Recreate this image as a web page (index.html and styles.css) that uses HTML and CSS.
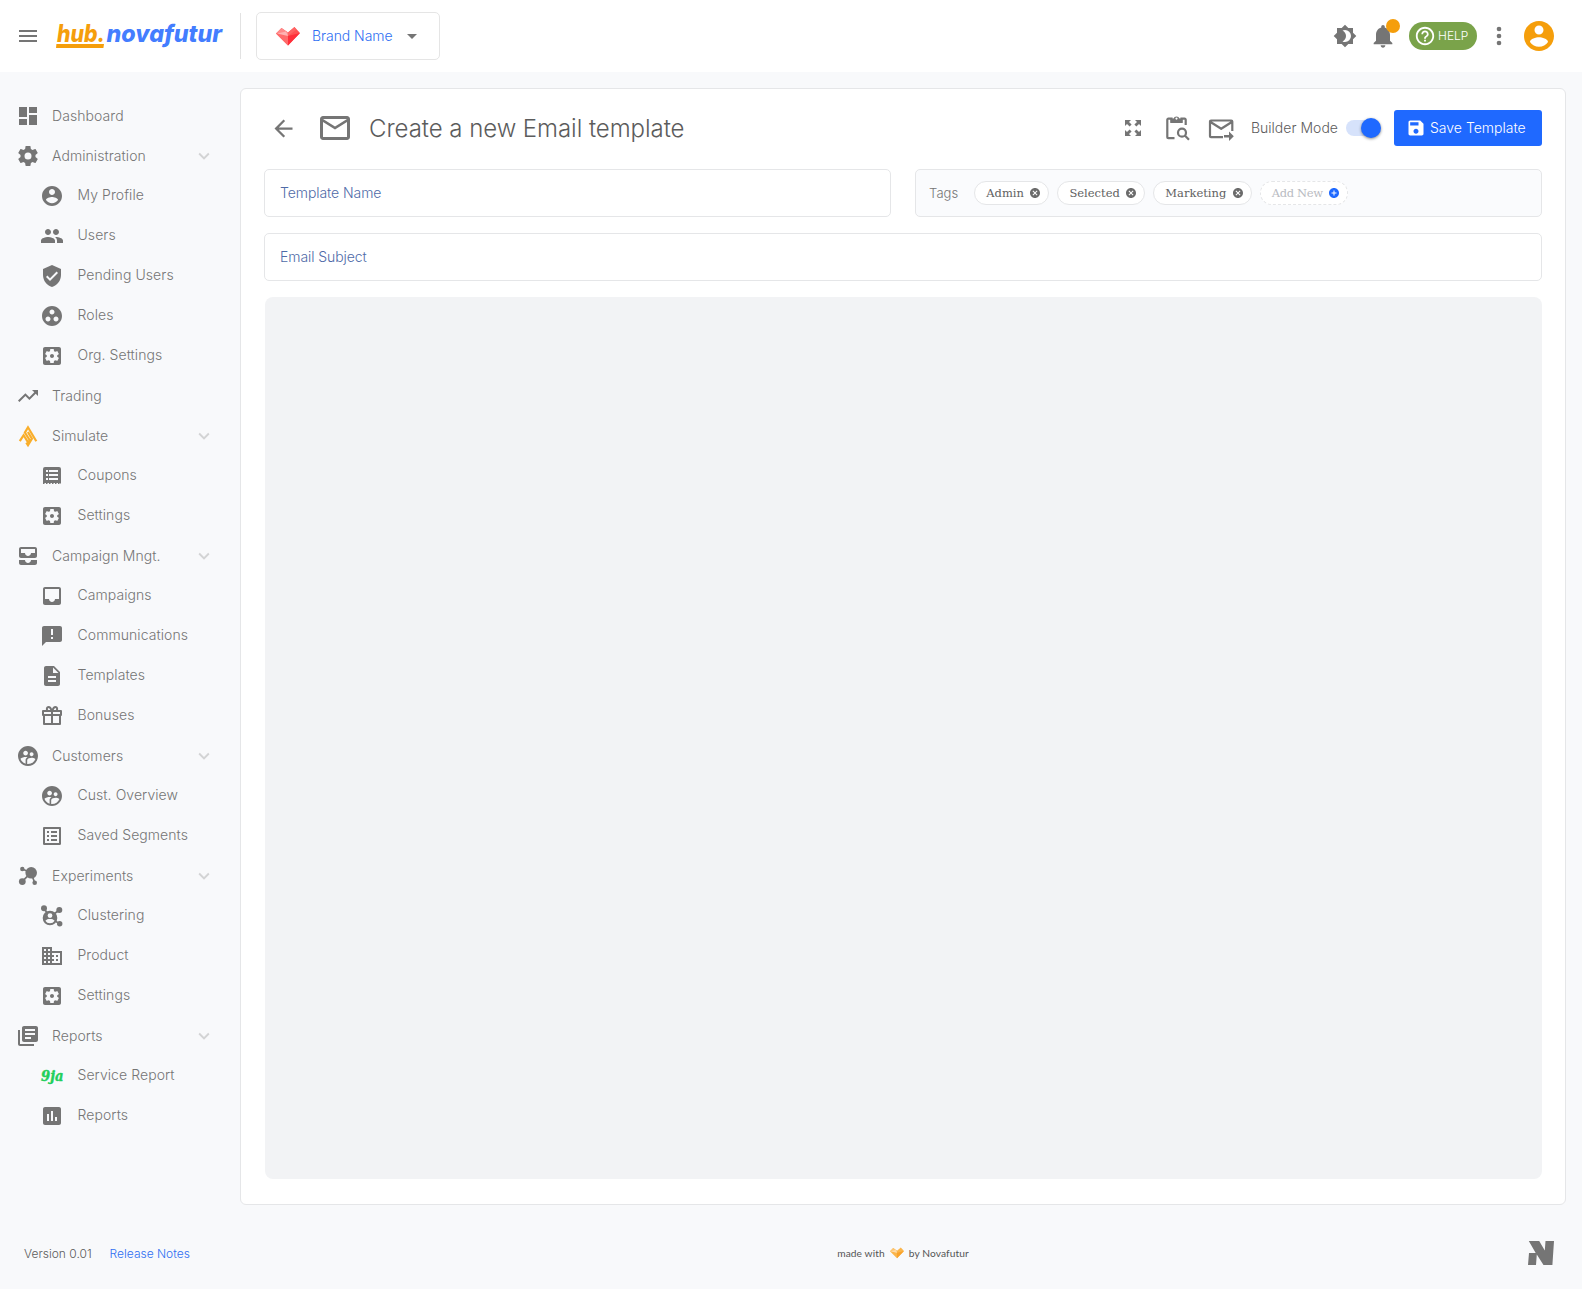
FILE: index.html
```
<!DOCTYPE html>
<html lang="en">
<head>
    <meta charset="UTF-8">
    <meta name="viewport" content="width=device-width, initial-scale=1.0">
    <title>Create a new Email template</title>
    <link rel="stylesheet" href="styles.css">
</head>
<body>

<!-- icon set -->
<svg class="sprite" xmlns="http://www.w3.org/2000/svg">
    <symbol id="i-menu" viewBox="0 0 24 24"><path d="M3 6h18v2H3zM3 11h18v2H3zM3 16h18v2H3z"/></symbol>
    <symbol id="i-dashboard" viewBox="0 0 24 24"><path d="M13,3V9H21V3M13,21H21V11H13M3,21H11V15H3M3,13H11V3H3V13Z"/></symbol>
    <symbol id="i-cog" viewBox="0 0 24 24"><path d="M12,15.5A3.5,3.5 0 0,1 8.5,12A3.5,3.5 0 0,1 12,8.5A3.5,3.5 0 0,1 15.5,12A3.5,3.5 0 0,1 12,15.5M19.43,12.97C19.47,12.65 19.5,12.33 19.5,12C19.5,11.67 19.47,11.34 19.43,11L21.54,9.37C21.73,9.22 21.78,8.95 21.66,8.73L19.66,5.27C19.54,5.05 19.27,4.96 19.05,5.05L16.56,6.05C16.04,5.66 15.5,5.32 14.87,5.07L14.5,2.42C14.46,2.18 14.25,2 14,2H10C9.75,2 9.54,2.18 9.5,2.42L9.13,5.07C8.5,5.32 7.96,5.66 7.44,6.05L4.95,5.05C4.73,4.96 4.46,5.05 4.34,5.27L2.34,8.73C2.21,8.95 2.27,9.22 2.46,9.37L4.57,11C4.53,11.34 4.5,11.67 4.5,12C4.5,12.33 4.53,12.65 4.57,12.97L2.46,14.63C2.27,14.78 2.21,15.05 2.34,15.27L4.34,18.73C4.46,18.95 4.73,19.03 4.95,18.95L7.44,17.94C7.96,18.34 8.5,18.68 9.13,18.93L9.5,21.58C9.54,21.82 9.75,22 10,22H14C14.25,22 14.46,21.82 14.5,21.58L14.87,18.93C15.5,18.67 16.04,18.34 16.56,17.94L19.05,18.95C19.27,19.03 19.54,18.95 19.66,18.73L21.66,15.27C21.78,15.05 21.73,14.78 21.54,14.63L19.43,12.97Z"/></symbol>
    <symbol id="i-profile" viewBox="0 0 24 24"><path d="M12 2C6.48 2 2 6.48 2 12s4.48 10 10 10 10-4.48 10-10S17.52 2 12 2zm0 3c1.66 0 3 1.34 3 3s-1.34 3-3 3-3-1.34-3-3 1.34-3 3-3zm0 14.2c-2.5 0-4.71-1.28-6-3.22.03-1.99 4-3.08 6-3.08 1.99 0 5.97 1.09 6 3.08-1.29 1.94-3.5 3.22-6 3.22z"/></symbol>
    <symbol id="i-users" viewBox="0 0 24 24"><path d="M16 11c1.66 0 2.99-1.34 2.99-3S17.66 5 16 5c-1.66 0-3 1.34-3 3s1.34 3 3 3zm-8 0c1.66 0 2.99-1.34 2.99-3S9.66 5 8 5C6.34 5 5 6.34 5 8s1.34 3 3 3zm0 2c-2.33 0-7 1.17-7 3.5V19h14v-2.5c0-2.33-4.67-3.5-7-3.5zm8 0c-.29 0-.62.02-.97.05 1.16.84 1.97 1.97 1.97 3.45V19h6v-2.5c0-2.33-4.67-3.5-7-3.5z"/></symbol>
    <symbol id="i-shield" viewBox="0 0 24 24"><path d="M12 1L3 5v6c0 5.55 3.84 10.74 9 12 5.16-1.26 9-6.45 9-12V5l-9-4zm-2 16l-4-4 1.41-1.41L10 14.17l6.59-6.59L18 9l-8 8z"/></symbol>
    <symbol id="i-roles" viewBox="0 0 24 24"><path d="M12 2C6.48 2 2 6.48 2 12s4.48 10 10 10 10-4.48 10-10S17.52 2 12 2zM8 17.5c-1.38 0-2.5-1.12-2.5-2.5s1.12-2.5 2.5-2.5 2.5 1.12 2.5 2.5-1.12 2.5-2.5 2.5zM9.5 8c0-1.38 1.12-2.5 2.5-2.5s2.5 1.12 2.5 2.5-1.12 2.5-2.5 2.5S9.5 9.38 9.5 8zm6.5 9.5c-1.38 0-2.5-1.12-2.5-2.5s1.12-2.5 2.5-2.5 2.5 1.12 2.5 2.5-1.12 2.5-2.5 2.5z"/></symbol>
    <symbol id="i-settings" viewBox="0 0 24 24"><path d="M12 10c-1.1 0-2 .9-2 2s.9 2 2 2 2-.9 2-2-.9-2-2-2zm7-7H5c-1.11 0-2 .9-2 2v14c0 1.1.89 2 2 2h14c1.11 0 2-.9 2-2V5c0-1.1-.89-2-2-2zm-1.75 9c0 .23-.02.46-.05.68l1.48 1.16c.13.11.17.3.08.45l-1.4 2.42c-.09.15-.27.21-.43.15l-1.74-.7c-.36.28-.76.51-1.18.69l-.26 1.85c-.03.17-.18.3-.35.3h-2.8c-.17 0-.32-.13-.35-.29l-.26-1.85c-.43-.18-.82-.41-1.18-.69l-1.74.7c-.16.06-.34 0-.43-.15l-1.4-2.42c-.09-.15-.05-.34.08-.45l1.48-1.16c-.03-.23-.05-.46-.05-.69 0-.23.02-.46.05-.68l-1.48-1.16c-.13-.11-.17-.3-.08-.45l1.4-2.42c.09-.15.27-.21.43-.15l1.74.7c.36-.28.76-.51 1.18-.69l.26-1.85c.03-.17.18-.3.35-.3h2.8c.17 0 .32.13.35.29l.26 1.85c.43.18.82.41 1.18.69l1.74-.7c.16-.06.34 0 .43.15l1.4 2.42c.09.15.05.34-.08.45l-1.48 1.16c.03.23.05.46.05.69z"/></symbol>
    <symbol id="i-trading" viewBox="0 0 24 24"><path d="M16 6l2.29 2.29-4.88 4.88-4-4L2 16.59 3.41 18l6-6 4 4 6.3-6.29L22 12V6z"/></symbol>
    <symbol id="i-simulate" viewBox="0 0 24 24"><path fill="none" stroke="#f9ae2b" stroke-width="2.200" d="M3.800 17.200L7.600 11.200L12.200 18.600L13.600 16L8.900 8.600L12 3.300L20.300 17.200M11.900 8L15.900 14.800L12 21.200L10.300 18.600"/></symbol>
    <symbol id="i-coupon" viewBox="0 0 24 24"><path fill-rule="evenodd" d="M5 3h14a2 2 0 0 1 2 2v14H3V5a2 2 0 0 1 2-2zM6 6v2h2V6zM9 6v2h9V6zM6 10v2h2v-2zM9 10v2h9v-2zM6 14v2h2v-2zM9 14v2h9v-2z"/><path d="M3 19h1.5v1H3zM6 19h1.5v1H6zM9 19h1.5v1H9zM12 19h1.5v1H12zM15 19h1.5v1H15zM18 19h1.5v1H18zM20.5 19h.5v1h-.5z"/></symbol>
    <symbol id="i-all-inbox" viewBox="0 0 24 24"><path d="M19 3H5c-1.1 0-2 .9-2 2v7c0 1.1.9 2 2 2h14c1.1 0 2-.9 2-2V5c0-1.1-.9-2-2-2zm0 6h-4c0 1.62-1.38 3-3 3s-3-1.38-3-3H5V5h14v4zm-4 7h6v3c0 1.1-.9 2-2 2H5c-1.1 0-2-.9-2-2v-3h6c0 1.66 1.34 3 3 3s3-1.34 3-3z"/></symbol>
    <symbol id="i-inbox" viewBox="0 0 24 24"><path d="M19 3H4.99c-1.11 0-1.98.89-1.98 2L3 19c0 1.1.88 2 1.99 2H19c1.1 0 2-.9 2-2V5c0-1.11-.9-2-2-2zm0 12h-4c0 1.66-1.35 3-3 3s-3-1.34-3-3H4.99V5H19v10z"/></symbol>
    <symbol id="i-feedback" viewBox="0 0 24 24"><path d="M20 2H4c-1.1 0-1.99.9-1.99 2L2 22l4-4h14c1.1 0 2-.9 2-2V4c0-1.1-.9-2-2-2zm-7 13h-2v-2h2v2zm0-4h-2V5h2v6z"/></symbol>
    <symbol id="i-file" viewBox="0 0 24 24"><path d="M14 2H6c-1.1 0-1.99.9-1.99 2L4 20c0 1.1.89 2 1.99 2H18c1.1 0 2-.9 2-2V8l-6-6zm2 16H8v-2h8v2zm0-4H8v-2h8v2zm-3-5V3.5L18.5 9H13z"/></symbol>
    <symbol id="i-gift" viewBox="0 0 24 24"><path fill="none" stroke="currentColor" stroke-width="2" stroke-linejoin="round" d="M3 7h18v4H3zM4 11v9h16v-9M12 7v13M11.6 6.6C11 4.5 9.800 3 8.500 3C7 3 6.300 4.700 7.300 6.500M12.400 6.600C13 4.500 14.200 3 15.500 3C17 3 17.700 4.700 16.700 6.500"/></symbol>
    <symbol id="i-customers" viewBox="0 0 24 24"><path d="M11.99 2c-5.52 0-10 4.48-10 10s4.48 10 10 10 10-4.48 10-10-4.48-10-10-10zm3.61 6.34c1.07 0 1.93.86 1.93 1.93 0 1.07-.86 1.93-1.93 1.93-1.07 0-1.93-.86-1.93-1.93-.01-1.07.86-1.93 1.93-1.93zm-6-1.58c1.3 0 2.36 1.06 2.36 2.36 0 1.3-1.06 2.36-2.36 2.36s-2.36-1.06-2.36-2.36c0-1.31 1.05-2.36 2.36-2.36zm0 9.13v3.75c-2.4-.75-4.3-2.6-5.14-4.96 1.05-1.12 3.67-1.69 5.14-1.69.53 0 1.2.08 1.9.22-1.64.87-1.9 2.02-1.9 2.68zM11.99 20c-.27 0-.53-.01-.79-.04v-4.07c0-1.42 2.94-2.13 4.4-2.13 1.07 0 2.92.39 3.84 1.15-1.17 2.97-4.06 5.09-7.45 5.09z"/></symbol>
    <symbol id="i-list" viewBox="0 0 24 24"><path d="M19 5v14H5V5h14m1.100-2H3.900c-.5 0-.9.4-.9.9v16.200c0 .4.4.9.9.9h16.200c.4 0 .9-.5.9-.9V3.900c0-.5-.5-.9-.9-.9zM11 7h6v2h-6V7zm0 4h6v2h-6v-2zm0 4h6v2h-6zM7 7h2v2H7zm0 4h2v2H7zm0 4h2v2H7z"/></symbol>
    <symbol id="i-experiments" viewBox="0 0 24 24"><path fill="none" stroke="currentColor" stroke-width="1.700" d="M6.300 5L15 8.700L6.300 17.300M15 8.700L18.700 18.700"/><circle cx="15.200" cy="8.800" r="5.800"/><circle cx="6.300" cy="5" r="2.200"/><circle cx="6.300" cy="17.600" r="3.400"/><circle cx="18.700" cy="18.700" r="2.300"/></symbol>
    <symbol id="i-cluster" viewBox="0 0 24 24"><path fill="none" stroke="currentColor" stroke-width="1.700" d="M4 4L7 9M19.300 6L14 10M15 17L19.700 19.700"/><circle cx="4" cy="4.200" r="3"/><circle cx="19.300" cy="6" r="3"/><circle cx="19.700" cy="19.700" r="2.700"/><path fill-rule="evenodd" d="M10 6.700a7.300 7.300 0 1 0 0 14.600a7.300 7.300 0 1 0 0-14.600zM10 9.200a2.400 2.400 0 1 1 0 4.800a2.400 2.400 0 1 1 0-4.800zM5.400 16.700C6.500 15.300 8 14.900 10 14.900s3.500.4 4.600 1.800C13.500 18.400 12 19.200 10 19.200s-3.500-.8-4.600-2.500z"/></symbol>
    <symbol id="i-domain" viewBox="0 0 24 24"><path d="M12 7V3H2v18h20V7H12zM6 19H4v-2h2v2zm0-4H4v-2h2v2zm0-4H4V9h2v2zm0-4H4V5h2v2zm4 12H8v-2h2v2zm0-4H8v-2h2v2zm0-4H8V9h2v2zm0-4H8V5h2v2zm10 12h-8v-2h2v-2h-2v-2h2v-2h-2V9h8v10zm-2-8h-2v2h2v-2zm0 4h-2v2h2v-2z"/></symbol>
    <symbol id="i-library" viewBox="0 0 24 24"><path d="M4 6H2v14c0 1.100.9 2 2 2h14v-2H4V6zm16-4H8c-1.100 0-2 .9-2 2v12c0 1.100.9 2 2 2h12c1.100 0 2-.9 2-2V4c0-1.100-.9-2-2-2zm-1 9H9V9h10v2zm-4 4H9v-2h6v2zm4-8H9V5h10v2z"/></symbol>
    <symbol id="i-chart" viewBox="0 0 24 24"><path d="M19 3H5c-1.100 0-2 .9-2 2v14c0 1.100.9 2 2 2h14c1.100 0 2-.9 2-2V5c0-1.100-.9-2-2-2zM9 17H7v-7h2v7zm4 0h-2V7h2v10zm4 0h-2v-4h2v4z"/></symbol>
    <symbol id="i-chevron" viewBox="0 0 24 24"><path d="M7.410 8.590L12 13.170l4.590-4.580L18 10l-6 6-6-6z"/></symbol>
    <symbol id="i-caret" viewBox="0 0 24 24"><path d="M7 10l5 5 5-5z"/></symbol>
    <symbol id="i-theme" viewBox="0 0 24 24"><path d="M12,18C11.110,18 10.260,17.800 9.500,17.450C11.560,16.500 13,14.420 13,12C13,9.580 11.560,7.500 9.500,6.550C10.260,6.200 11.110,6 12,6A6,6 0 0,1 18,12A6,6 0 0,1 12,18M20,8.690V4H15.310L12,0.690L8.690,4H4V8.690L0.690,12L4,15.310V20H8.690L12,23.310L15.310,20H20V15.310L23.310,12L20,8.690Z"/></symbol>
    <symbol id="i-bell" viewBox="0 0 24 24"><path d="M12 22c1.100 0 2-.9 2-2h-4c0 1.100.89 2 2 2zm6-6v-5c0-3.070-1.640-5.640-4.500-6.320V4c0-.83-.67-1.500-1.500-1.500s-1.500.67-1.500 1.500v.68C7.630 5.360 6 7.920 6 11v5l-2 2v1h16v-1l-2-2z"/></symbol>
    <symbol id="i-help" viewBox="0 0 24 24"><path d="M11 18h2v-2h-2v2zm1-16C6.480 2 2 6.480 2 12s4.480 10 10 10 10-4.480 10-10S17.520 2 12 2zm0 18c-4.410 0-8-3.590-8-8s3.590-8 8-8 8 3.590 8 8-3.590 8-8 8zm0-14c-2.210 0-4 1.790-4 4h2c0-1.100.9-2 2-2s2 .9 2 2c0 2-3 1.750-3 5h2c0-2.250 3-2.500 3-5 0-2.210-1.790-4-4-4z"/></symbol>
    <symbol id="i-more" viewBox="0 0 24 24"><circle cx="12" cy="6" r="2"/><circle cx="12" cy="12" r="2"/><circle cx="12" cy="18" r="2"/></symbol>
    <symbol id="i-back" viewBox="0 0 24 24"><path d="M20 11H7.830l5.590-5.590L12 4l-8 8 8 8 1.410-1.410L7.830 13H20v-2z"/></symbol>
    <symbol id="i-mail" viewBox="0 0 24 24"><path d="M20 4H4c-1.100 0-1.990.9-1.990 2L2 18c0 1.100.9 2 2 2h16c1.100 0 2-.9 2-2V6c0-1.100-.9-2-2-2zm0 14H4V8l8 5 8-5v10zm-8-7L4 6h16l-8 5z"/></symbol>
    <symbol id="i-expand" viewBox="0 0 18 18"><path d="M1 1h6L5 3l2.600 2.600-2 2L3 5 1 7zM17 1v6l-2-2-2.600 2.600-2-2L13 3l-2-2zM1 17v-6l2 2 2.600-2.600 2 2L5 15l2 2zM17 17h-6l2-2-2.600-2.600 2-2L15 13l2-2z"/></symbol>
    <symbol id="i-preview" viewBox="0 0 26 26"><path fill="none" stroke="currentColor" stroke-width="2.200" d="M9.500 23.200H3.300a1 1 0 0 1-1-1V4.700a1 1 0 0 1 1-1H6.500V7h10V3.700h3.200a1 1 0 0 1 1 1V10"/><path fill-rule="evenodd" d="M5.500 3.500h3A3.200 3.200 0 0 1 14.500 3.500h3V7.800h-12zM11.500 2.500a1.100 1.100 0 1 0 0 2.200a1.100 1.100 0 1 0 0-2.200z"/><circle cx="17" cy="17.700" r="4" fill="none" stroke="currentColor" stroke-width="2.200"/><path stroke="currentColor" stroke-width="2.200" d="M19.800 20.500l4.200 4.200"/></symbol>
    <symbol id="i-send" viewBox="0 0 26 24"><path fill="none" stroke="currentColor" stroke-width="2.200" stroke-linejoin="round" d="M15 20.200H3a1 1 0 0 1-1-1V4.500a1 1 0 0 1 1-1h20.300a1 1 0 0 1 1 1V14M2.500 5l10.700 6.800L23.800 5"/><path d="M16 18h5v-3.500l4.800 4.700-4.800 4.700v-3.500h-5z"/></symbol>
    <symbol id="i-save" viewBox="0 0 24 24"><path d="M17 3H5c-1.110 0-2 .9-2 2v14c0 1.100.89 2 2 2h14c1.100 0 2-.9 2-2V7l-4-4zm-5 16c-1.660 0-3-1.340-3-3s1.340-3 3-3 3 1.340 3 3-1.340 3-3 3zm3-10H5V5h10v4z"/></symbol>
    <symbol id="i-cancel" viewBox="0 0 24 24"><path d="M12 2C6.470 2 2 6.470 2 12s4.470 10 10 10 10-4.470 10-10S17.530 2 12 2zm5 13.590L15.590 17 12 13.410 8.410 17 7 15.590 10.590 12 7 8.410 8.410 7 12 10.590 15.590 7 17 8.410 13.410 12 17 15.590z"/></symbol>
    <symbol id="i-add" viewBox="0 0 24 24"><path d="M12 2C6.480 2 2 6.480 2 12s4.480 10 10 10 10-4.480 10-10S17.520 2 12 2zm5 11h-4v4h-2v-4H7v-2h4V7h2v4h4v2z"/></symbol>
</svg>

<header class="topbar">
    <svg class="icon menu-btn"><use href="#i-menu"/></svg>
    <svg class="logo" viewBox="0 0 172 36">
        <text x="1" y="23.800" textLength="48" lengthAdjust="spacingAndGlyphs" fill="#f59e0b">hub.</text>
        <text x="50.500" y="23.800" textLength="115.500" lengthAdjust="spacingAndGlyphs" fill="#437dff">novafutur</text>
        <path d="M.4 26h47.600l-.6 4H0z" fill="#f59e0b"/>
    </svg>
    <div class="brand">
        <svg class="brand-heart" viewBox="0 0 24 19">
            <path d="M0 6.500L5.500 1L12 5.500L18.500 0L24 6L12 18.500z" fill="#ff5252"/>
            <path d="M0 6.500L5.500 1L12 5.500V9z" fill="#ff8a8a"/>
            <path d="M0 6.500L9 5.500L12 9V18.500z" fill="#ff6b6b"/>
            <path d="M1 6.500L10 4.500L12 9z" fill="#ffb3b3"/>
            <path d="M12 5.500L18.500 0L20 3L12 9z" fill="#ff6464"/>
            <path d="M12 9L24 6L12 18.500z" fill="#ff2f3a"/>
        </svg>
        <span>Brand Name</span>
        <svg class="icon"><use href="#i-caret"/></svg>
    </div>
    <div class="top-actions">
        <svg class="icon"><use href="#i-theme"/></svg>
        <div class="bell">
            <svg class="icon icon-28"><use href="#i-bell"/></svg>
            <span class="badge"></span>
        </div>
        <button class="help"><svg class="icon"><use href="#i-help"/></svg><span>HELP</span></button>
        <svg class="icon icon-28 more"><use href="#i-more"/></svg>
        <svg class="icon avatar"><use href="#i-profile"/></svg>
    </div>
</header>

<div class="layout">
    <nav class="sidebar">
        <a class="nav-item"><svg class="icon"><use href="#i-dashboard"/></svg><span>Dashboard</span></a>
        <a class="nav-item"><svg class="icon"><use href="#i-cog"/></svg><span>Administration</span><svg class="icon chevron"><use href="#i-chevron"/></svg></a>
        <a class="nav-item sub"><svg class="icon"><use href="#i-profile"/></svg><span>My Profile</span></a>
        <a class="nav-item sub"><svg class="icon"><use href="#i-users"/></svg><span>Users</span></a>
        <a class="nav-item sub"><svg class="icon"><use href="#i-shield"/></svg><span>Pending Users</span></a>
        <a class="nav-item sub"><svg class="icon"><use href="#i-roles"/></svg><span>Roles</span></a>
        <a class="nav-item sub"><svg class="icon"><use href="#i-settings"/></svg><span>Org. Settings</span></a>
        <a class="nav-item"><svg class="icon"><use href="#i-trading"/></svg><span>Trading</span></a>
        <a class="nav-item"><svg class="icon"><use href="#i-simulate"/></svg><span>Simulate</span><svg class="icon chevron"><use href="#i-chevron"/></svg></a>
        <a class="nav-item sub"><svg class="icon"><use href="#i-coupon"/></svg><span>Coupons</span></a>
        <a class="nav-item sub"><svg class="icon"><use href="#i-settings"/></svg><span>Settings</span></a>
        <a class="nav-item"><svg class="icon"><use href="#i-all-inbox"/></svg><span>Campaign Mngt.</span><svg class="icon chevron"><use href="#i-chevron"/></svg></a>
        <a class="nav-item sub"><svg class="icon"><use href="#i-inbox"/></svg><span>Campaigns</span></a>
        <a class="nav-item sub"><svg class="icon"><use href="#i-feedback"/></svg><span>Communications</span></a>
        <a class="nav-item sub"><svg class="icon"><use href="#i-file"/></svg><span>Templates</span></a>
        <a class="nav-item sub"><svg class="icon"><use href="#i-gift"/></svg><span>Bonuses</span></a>
        <a class="nav-item"><svg class="icon"><use href="#i-customers"/></svg><span>Customers</span><svg class="icon chevron"><use href="#i-chevron"/></svg></a>
        <a class="nav-item sub"><svg class="icon"><use href="#i-customers"/></svg><span>Cust. Overview</span></a>
        <a class="nav-item sub"><svg class="icon"><use href="#i-list"/></svg><span>Saved Segments</span></a>
        <a class="nav-item"><svg class="icon"><use href="#i-experiments"/></svg><span>Experiments</span><svg class="icon chevron"><use href="#i-chevron"/></svg></a>
        <a class="nav-item sub"><svg class="icon"><use href="#i-cluster"/></svg><span>Clustering</span></a>
        <a class="nav-item sub"><svg class="icon"><use href="#i-domain"/></svg><span>Product</span></a>
        <a class="nav-item sub"><svg class="icon"><use href="#i-settings"/></svg><span>Settings</span></a>
        <a class="nav-item"><svg class="icon"><use href="#i-library"/></svg><span>Reports</span><svg class="icon chevron"><use href="#i-chevron"/></svg></a>
        <a class="nav-item sub"><svg class="icon naija" viewBox="0 0 24 24"><text x="1" y="16.500" textLength="22.500" lengthAdjust="spacingAndGlyphs">9ja</text></svg><span>Service Report</span></a>
        <a class="nav-item sub"><svg class="icon"><use href="#i-chart"/></svg><span>Reports</span></a>
    </nav>

    <main class="card">
        <div class="card-head">
            <svg class="icon back"><use href="#i-back"/></svg>
            <svg class="icon mail"><use href="#i-mail"/></svg>
            <h1>Create a new Email template</h1>
            <div class="tools">
                <svg class="icon expand"><use href="#i-expand"/></svg>
                <svg class="icon preview"><use href="#i-preview"/></svg>
                <svg class="icon send"><use href="#i-send"/></svg>
                <span class="mode">Builder Mode</span>
                <span class="switch"><span class="thumb"></span></span>
                <button class="save"><svg class="icon"><use href="#i-save"/></svg><span>Save Template</span></button>
            </div>
        </div>

        <div class="fields">
            <div class="field">Template Name</div>
            <div class="tags">
                <span class="tags-label">Tags</span>
                <span class="chip">Admin<svg class="icon"><use href="#i-cancel"/></svg></span>
                <span class="chip">Selected<svg class="icon"><use href="#i-cancel"/></svg></span>
                <span class="chip">Marketing<svg class="icon"><use href="#i-cancel"/></svg></span>
                <span class="chip add">Add New<svg class="icon"><use href="#i-add"/></svg></span>
            </div>
            <div class="field wide">Email Subject</div>
        </div>

        <div class="builder"></div>
    </main>
</div>

<footer class="footer">
    <div class="version">
        <span>Version 0.01</span>
        <a>Release Notes</a>
    </div>
    <div class="credits">
        <div class="made">
            <span>made with</span>
            <svg class="gold-heart" viewBox="0 0 24 19">
                <path d="M0 6.500L5.500 1L12 5.500L18.500 0L24 6L12 18.500z" fill="#fbb54a"/>
                <path d="M0 6.500L5.500 1L12 5.500V9z" fill="#fdc672"/>
                <path d="M1 6.500L10 4.500L12 9z" fill="#fedcaa"/>
                <path d="M12 9L24 6L12 18.500z" fill="#f9a32b"/>
            </svg>
            <span>by Novafutur</span>
        </div>
        <svg class="n-logo" viewBox="0 0 26 24"><path d="M.8 0h10.400l5.600 9.500L17.500 0H26l-1.600 24H15.500L8.800 13.500 8 24H0l1-12h6.700z"/></svg>
    </div>
</footer>

</body>
</html>
```

FILE: styles.css
```
* {
    box-sizing: border-box;
}

body {
    margin: 0;
    height: 1289px;
    display: flex;
    flex-direction: column;
    background-color: #f8f9fb;
    color: #757575;
    font-family: Inter, "Liberation Sans", sans-serif;
    font-size: 14px;
    font-weight: 350;
    letter-spacing: 0.07px;
}

.sprite {
    display: none;
}

.icon {
    width: 24px;
    height: 24px;
    flex: none;
    fill: currentColor;
}

.icon-28 {
    width: 28px;
    height: 28px;
}

button {
    border: none;
    font-family: inherit;
    font-weight: inherit;
    letter-spacing: 0;
    cursor: pointer;
}

/* top bar */
.topbar {
    height: 72px;
    flex: none;
    display: flex;
    align-items: center;
    padding: 0 25px 0 16px;
    background-color: #fff;
}

.logo {
    width: 172px;
    height: 36px;
    margin-left: 16px;
    overflow: visible;
    font-size: 24px;
    font-weight: 800;
    font-style: italic;
    letter-spacing: 0;
}

.brand {
    position: relative;
    width: 184px;
    height: 48px;
    margin-left: 28px;
    padding: 0 15px 0 19px;
    display: flex;
    align-items: center;
    border: 1px solid #e5e5e5;
    border-radius: 5px;
    color: #2f6ff2;
    letter-spacing: -0.05px;
}

.brand::before {
    content: "";
    position: absolute;
    left: -17px;
    top: 0;
    width: 1px;
    height: 46px;
    background-color: #e2e2e2;
}

.brand span {
    padding-bottom: 2px;
}

.brand-heart {
    width: 24px;
    height: 19px;
    margin-right: 12px;
}

.brand .icon {
    margin-left: auto;
    color: #757575;
}

.top-actions {
    margin-left: auto;
    display: flex;
    align-items: center;
}

.bell {
    position: relative;
    height: 28px;
    margin: 0 12px;
}

.badge {
    position: absolute;
    top: -3px;
    right: -3px;
    width: 14px;
    height: 14px;
    border-radius: 50%;
    background-color: #f59e0b;
}

.help {
    width: 68px;
    height: 28px;
    display: flex;
    align-items: center;
    padding: 0 0 0 5px;
    border-radius: 14px;
    background-color: #7aa34a;
    color: #fff;
    font-size: 12px;
}

.help .icon {
    width: 22px;
    height: 22px;
    margin-right: 2px;
}

.help span {
    padding-bottom: 1px;
}

.more {
    margin: 0 8px;
}

.avatar {
    width: 36px;
    height: 36px;
    color: #f59e0b;
}

/* sidebar and card */
.layout {
    flex: none;
    display: flex;
    height: 1133px;
}

.sidebar {
    width: 240px;
    padding: 24px 24px 0 16px;
}

.nav-item {
    height: 40px;
    display: flex;
    align-items: center;
    gap: 12px;
}

.nav-item span {
    padding-bottom: 2px;
}

.nav-item.sub {
    padding-left: 24px;
    gap: 13.5px;
}

.nav-item.sub span {
    padding-bottom: 4px;
}

.nav-item .chevron {
    width: 22px;
    height: 22px;
    margin-left: auto;
    margin-right: 1px;
    color: #d3d4d5;
}

.naija {
    overflow: visible;
    font-family: "DejaVu Serif", serif;
    font-size: 14.5px;
    font-weight: bold;
    font-style: italic;
    letter-spacing: 0;
    color: #22cf5b;
    stroke: currentColor;
    stroke-width: 0.4;
}

.card {
    width: 1326px;
    margin-top: 16px;
    padding: 21px 23px 25px;
    display: flex;
    flex-direction: column;
    border: 1px solid #e5e6e8;
    border-radius: 6px;
    background-color: #fff;
}

.card-head {
    height: 36px;
    display: flex;
    align-items: center;
}

.back {
    width: 27px;
    height: 27px;
    margin-left: 6px;
}

.mail {
    width: 36px;
    height: 36px;
    margin: 0 16px 0 20px;
}

h1 {
    margin: 0;
    font-size: 24px;
    font-weight: 350;
    letter-spacing: -0.05px;
    color: #5c5c5c;
}

.tools {
    margin-left: auto;
    display: flex;
    align-items: center;
    color: #757575;
}

.expand {
    width: 18px;
    height: 18px;
}

.preview {
    width: 26px;
    height: 26px;
    margin-left: 23px;
}

.send {
    width: 26px;
    height: 24px;
    margin: 1px 17px 0;
}

.mode {
    padding-bottom: 2px;
    color: #5c5c5c;
    letter-spacing: 0.02px;
}

.switch {
    width: 34px;
    height: 16px;
    margin: 0 14px 0 8px;
    display: flex;
    align-items: center;
    justify-content: flex-end;
    border-radius: 8px;
    background-color: #d6e2fb;
}

.thumb {
    width: 20px;
    height: 20px;
    flex: none;
    margin-right: -1px;
    border-radius: 50%;
    background-color: #1f69ff;
    box-shadow: 0 1px 3px rgba(0, 0, 0, 0.45);
}

.save {
    width: 148px;
    height: 36px;
    display: flex;
    align-items: center;
    padding: 0 0 0 12px;
    border-radius: 3px;
    background-color: #1f69ff;
    color: #fff;
    font-size: 14px;
}

.save .icon {
    width: 20px;
    height: 20px;
    margin-right: 4px;
}

.save span {
    padding-bottom: 1px;
}

.fields {
    margin-top: 23px;
    display: grid;
    grid-template-columns: 1fr 1fr;
    gap: 16px 24px;
}

.field,
.tags {
    height: 48px;
    display: flex;
    align-items: center;
    border: 1px solid #e5e6e8;
    border-radius: 5px;
}

.field {
    padding: 0 15px 2px;
    color: #4f6ba8;
    letter-spacing: -0.07px;
}

.wide {
    grid-column: 1 / -1;
}

.tags {
    padding-left: 13px;
    gap: 8px;
    background-color: #fafbfd;
    font-size: 13px;
}

.tags-label {
    margin-right: 8px;
}

.chip {
    height: 24px;
    display: flex;
    align-items: center;
    gap: 5.5px;
    padding: 0 7px 0 11px;
    border: 1px solid #e5e6e8;
    border-radius: 12px;
    background-color: #fff;
    color: #616161;
    font-family: "DejaVu Serif", serif;
    font-size: 11.5px;
    letter-spacing: 0;
}

.chip .icon {
    width: 12px;
    height: 12px;
    color: #6b6b6b;
}

.chip.add {
    border-style: dashed;
    color: #b9bbc2;
    letter-spacing: -0.35px;
}

.chip.add .icon {
    color: #1f69ff;
}

.builder {
    flex: 1;
    margin: 16px 0 0 1px;
    border-radius: 8px;
    background-color: #f2f3f5;
}

/* footer */
.footer {
    margin-top: 32px;
    height: 32px;
    display: flex;
    align-items: center;
    font-size: 12px;
    letter-spacing: 0;
}

.version {
    width: 240px;
    padding-left: 24px;
    display: flex;
    gap: 18px;
    color: #5c5c5c;
}

.version a {
    color: #2f6ff2;
}

.credits {
    width: 1326px;
    display: grid;
    grid-template-columns: 1fr auto 1fr;
    align-items: center;
}

.made {
    grid-column: 2;
    display: flex;
    align-items: center;
    gap: 5px;
    color: #555;
    font-family: Lato, sans-serif;
    font-size: 10.2px;
    font-weight: 400;
    letter-spacing: 0.1px;
}

.gold-heart {
    width: 14px;
    height: 12px;
}

.n-logo {
    width: 26px;
    height: 24px;
    justify-self: end;
    margin-right: 12px;
    fill: #757575;
}
```
